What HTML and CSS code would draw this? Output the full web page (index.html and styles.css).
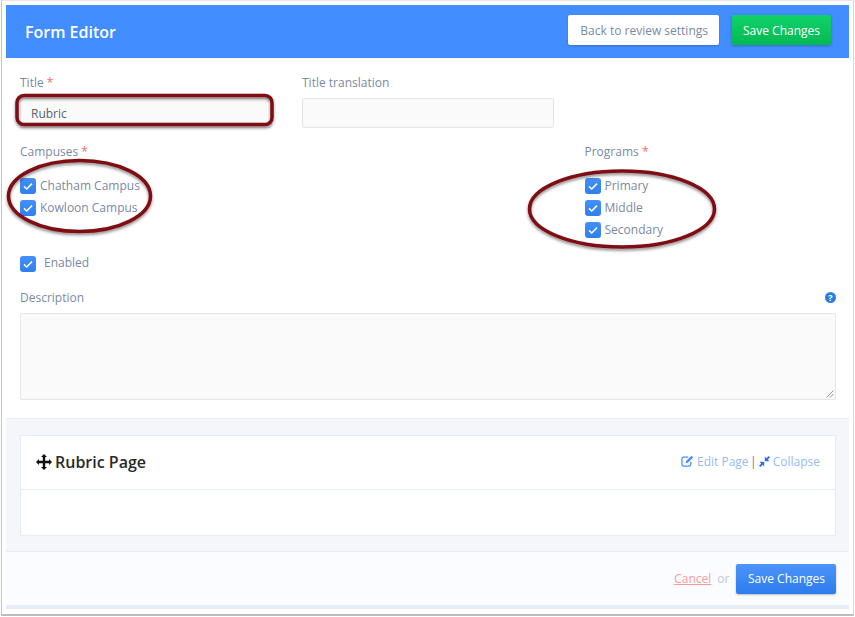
FILE: index.html
```html
<!DOCTYPE html>
<html lang="en">
<head>
    <meta charset="UTF-8">
    <title>Form Editor</title>
    <link rel="stylesheet" href="styles.css">
</head>
<body>
    <div class="window">
        <div class="panel">
            <div class="topbar">
                <h1>Form Editor</h1>
                <div class="topbar-actions">
                    <a class="btn btn-white">Back to review settings</a>
                    <a class="btn btn-green">Save Changes</a>
                </div>
            </div>

            <div class="form">
                <div class="title-row">
                    <div class="field">
                        <label>Title <span class="req">*</span></label>
                        <div class="input input-title">Rubric</div>
                    </div>
                    <div class="field">
                        <label>Title translation</label>
                        <div class="input"></div>
                    </div>
                </div>

                <div class="checks-row">
                    <div class="check-group">
                        <label>Campuses <span class="req">*</span></label>
                        <div class="check"><span class="box"><svg viewBox="0 0 16 16"><path d="M4 8.4l2.7 2.6L12 5.6"/></svg></span>Chatham Campus</div>
                        <div class="check"><span class="box"><svg viewBox="0 0 16 16"><path d="M4 8.4l2.7 2.6L12 5.6"/></svg></span>Kowloon Campus</div>
                    </div>
                    <div class="check-group">
                        <label>Programs <span class="req">*</span></label>
                        <div class="check"><span class="box"><svg viewBox="0 0 16 16"><path d="M4 8.4l2.7 2.6L12 5.6"/></svg></span>Primary</div>
                        <div class="check"><span class="box"><svg viewBox="0 0 16 16"><path d="M4 8.4l2.7 2.6L12 5.6"/></svg></span>Middle</div>
                        <div class="check"><span class="box"><svg viewBox="0 0 16 16"><path d="M4 8.4l2.7 2.6L12 5.6"/></svg></span>Secondary</div>
                    </div>
                </div>

                <div class="check check-enabled"><span class="box"><svg viewBox="0 0 16 16"><path d="M4 8.4l2.7 2.6L12 5.6"/></svg></span>Enabled</div>

                <div class="desc-label">
                    <label>Description</label>
                    <span class="help">?</span>
                </div>
                <div class="textarea">
                    <svg class="grip" viewBox="0 0 8 8"><path d="M7.5 0.5L0.5 7.5M7.5 4L4 7.5"/></svg>
                </div>
            </div>

            <div class="pages">
                <div class="page-card">
                    <div class="page-head">
                        <h2>
                            <svg class="move" viewBox="0 0 16 16"><path d="M8 0l3 3H9.200v3.800H13V5l3 3-3 3V9.200H9.200V13H11l-3 3-3-3h1.800V9.200H3V11L0 8l3-3v1.800h3.800V3H5z"/></svg>
                            Rubric Page
                        </h2>
                        <div class="page-links">
                            <svg class="edit" viewBox="0 0 14 13"><path d="M10.6 7.4v3A1.6 1.6 0 0 1 9 12H2.6A1.6 1.6 0 0 1 1 10.400V4a1.600 1.600 0 0 1 1.600-1.600h5.200" fill="none" stroke="#4a90f5" stroke-width="1.400"/><path d="M11.300 0.800l1.900 1.900-5.800 5.800-2.400 0.500 0.500-2.400z"/></svg>
                            <a>Edit Page</a>
                            <span class="sep">|</span>
                            <svg class="compress" viewBox="0 0 12 12"><path d="M12 1.500L9.600 3.900 11.400 5.700H6.300V.6L8.100 2.400 10.500 0zM0 10.500L2.400 8.100 .6 6.300H5.700V11.400L3.900 9.600 1.500 12z"/></svg>
                            <a>Collapse</a>
                        </div>
                    </div>
                    <div class="page-body"></div>
                </div>
            </div>

            <div class="footer">
                <a class="cancel">Cancel</a>
                <span class="or">or</span>
                <a class="btn btn-blue">Save Changes</a>
            </div>
        </div>

        <!-- red callouts drawn over the form -->
        <svg class="callouts" viewBox="0 0 855 617">
            <defs>
                <filter id="soft" x="-10%" y="-20%" width="120%" height="150%">
                    <feDropShadow dx="0" dy="2" stdDeviation="1.500" flood-color="#000" flood-opacity="0.45"/>
                </filter>
            </defs>
            <rect x="17" y="95.500" width="255" height="29" rx="7"/>
            <ellipse cx="79.500" cy="196" rx="71" ry="35.500"/>
            <ellipse cx="622" cy="209" rx="92.500" ry="38"/>
        </svg>
    </div>
</body>
</html>
```

FILE: styles.css
```css
/* Page and screenshot frame */
body {
    margin: 0;
    background: #fff;
    font-family: "Open Sans", sans-serif;
    font-size: 12px;
    color: #7b8aa3;
}

.window {
    position: relative;
    width: 851px;
    height: 613px;
    border-left: 1px solid #c4c4c4;
    border-right: 1px solid #d8d8d8;
    border-top: 1px solid #e8e8e8;
    border-bottom: 2px solid #bdbdbd;
    margin-left: 1px;
}

.panel {
    box-sizing: border-box;
    height: 100%;
    padding: 4px 4px 5px 4px;
    display: flex;
    flex-direction: column;
}

/* Blue header */
.topbar {
    height: 53px;
    flex-shrink: 0;
    display: flex;
    justify-content: space-between;
    align-items: center;
    padding: 0 18px 0 19px;
    background: #428dff;
}

.topbar h1 {
    margin: 0;
    font-size: 16px;
    font-weight: 600;
    color: #fff;
}

.topbar-actions {
    display: flex;
    gap: 13px;
    margin-bottom: 3px;
}

.btn {
    height: 30px;
    display: flex;
    align-items: center;
    box-sizing: border-box;
    border-radius: 2px;
    font-size: 12px;
    font-weight: 400;
}

.btn-white {
    padding: 0 11px 0 12px;
    background: #fff;
    color: #7b8aa3;
    box-shadow: 0 1px 2px rgba(0, 0, 0, 0.2);
}

.btn-green {
    padding: 0 11px;
    background: linear-gradient(#12d26a, #04b853);
    color: #fff;
    box-shadow: 0 1px 3px rgba(0, 0, 0, 0.25);
}

.btn-blue {
    padding: 0 11px 0 11.500px;
    background: linear-gradient(#4d94fb, #2b7cec);
    color: #fff;
    box-shadow: 0 1px 2px rgba(0, 0, 0, 0.25);
}

/* Form fields */
.form {
    flex: 1;
    padding: 16px 13px 0 14px;
}

label {
    display: block;
    line-height: 17px;
    color: #7b8aa3;
}

.req {
    color: #f66a6a;
}

.title-row {
    display: flex;
    gap: 30px;
}

.field {
    width: 252px;
}

.input {
    height: 30px;
    box-sizing: border-box;
    margin-top: 7px;
    padding: 0 10px;
    background: #fafafa;
    border: 1px solid #e6e6e6;
    border-radius: 2px;
    line-height: 29px;
    color: #555f70;
}

.checks-row {
    display: flex;
    margin-top: 15px;
}

.check-group {
    flex: none;
    width: 564.500px;
}

.check-group + .check-group {
    flex: 1;
}

.check-group label {
    margin-bottom: 14px;
}

.check {
    height: 22px;
    display: flex;
    align-items: center;
    gap: 4px;
}

.box {
    width: 16px;
    height: 16px;
    margin-top: 2px;
    flex-shrink: 0;
    display: flex;
    border-radius: 3px;
    background: linear-gradient(#4390f8, #2f7ff0);
}

.box svg {
    width: 16px;
    height: 16px;
    fill: none;
    stroke: #fff;
    stroke-width: 1.500;
}

.check-enabled {
    margin-top: 11px;
    gap: 8px;
}

.check-enabled .box {
    margin-top: 4px;
}

.desc-label {
    display: flex;
    justify-content: space-between;
    align-items: center;
    margin-top: 16px;
}

.help {
    width: 11px;
    height: 11px;
    border-radius: 50%;
    background: #2a7de1;
    color: #fff;
    font-size: 9px;
    font-weight: 700;
    line-height: 11px;
    text-align: center;
}

.textarea {
    position: relative;
    height: 85px;
    margin-top: 7px;
    background: #fafafa;
    border: 1px solid #e6e6e6;
    border-radius: 2px;
}

.grip {
    position: absolute;
    right: 1px;
    bottom: 1px;
    width: 8px;
    height: 8px;
    fill: none;
    stroke: #999;
    stroke-width: 1;
}

/* Rubric page block */
.pages {
    padding: 16px 13px 15px 14px;
    background: #f5f6fa;
    border-top: 1px solid #e3edf9;
    border-bottom: 1px solid #e3edf9;
}

.page-card {
    background: #fff;
    border: 1px solid #e3edf9;
}

.page-head {
    height: 52px;
    display: flex;
    justify-content: space-between;
    align-items: center;
    padding: 0 15px 1px 15px;
    border-bottom: 1px solid #e3edf9;
}

.page-head h2 {
    margin: 0;
    display: flex;
    align-items: center;
    gap: 3px;
    font-size: 16px;
    font-weight: 600;
    color: #2a2a2a;
}

.move {
    width: 16px;
    height: 16px;
    fill: #111;
}

.page-links {
    display: flex;
    align-items: center;
    gap: 3px;
    margin-bottom: 2px;
    color: #93bcf8;
}

.edit {
    width: 13px;
    height: 12px;
    fill: #4a90f5;
}

.compress {
    width: 11px;
    height: 11px;
    fill: #2a72e6;
}

.sep {
    margin: 0 -1px 0 -1.500px;
    color: #777;
}

.page-body {
    height: 45px;
}

/* Bottom actions */
.footer {
    height: 57px;
    flex-shrink: 0;
    display: flex;
    justify-content: flex-end;
    align-items: center;
    gap: 6px;
    padding: 0 13px 0 0;
    background: #fbfcff;
    border-bottom: 4px solid #e6edf8;
    box-sizing: border-box;
}

.cancel {
    color: #f79a9a;
    text-decoration: underline;
}

.or {
    margin-right: 1px;
    color: #c2c8d2;
}

/* Red annotations */
.callouts {
    position: absolute;
    left: -2px;
    top: -1px;
    width: 855px;
    height: 617px;
    fill: none;
    stroke: #7f0d12;
    stroke-width: 3.500;
    pointer-events: none;
}

.callouts rect,
.callouts ellipse {
    filter: url(#soft);
}
```
